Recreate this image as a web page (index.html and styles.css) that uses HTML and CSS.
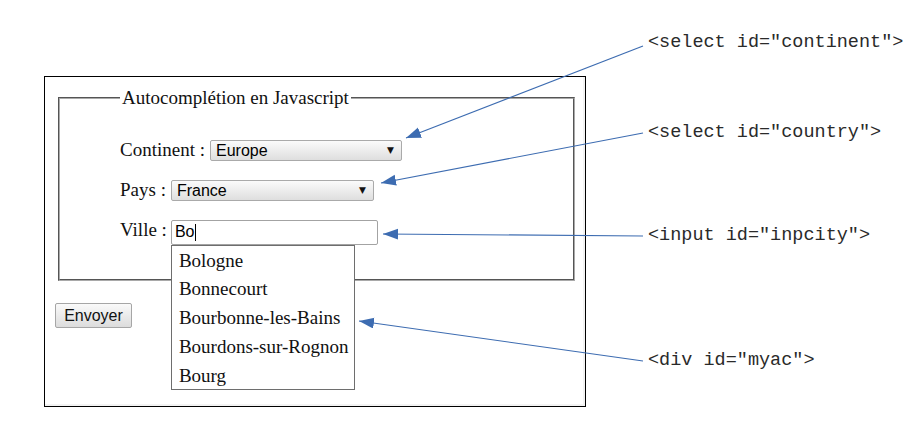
FILE: index.html
```html
<!DOCTYPE html>
<html lang="fr">
<head>
  <meta charset="UTF-8">
  <title>Autocomplétion en Javascript</title>
  <link rel="stylesheet" href="styles.css">
</head>
<body>
  <div class="page">

    <!-- Demo form -->
    <div class="demo">
      <form class="form">
        <fieldset class="group">
          <legend>Autocomplétion en Javascript</legend>
          <div class="row">
            <label class="lbl" for="continent">Continent :</label>
            <span class="select select-continent">
              <select id="continent"><option>Europe</option></select>
            </span>
          </div>
          <div class="row">
            <label class="lbl" for="country">Pays :</label>
            <span class="select select-country">
              <select id="country"><option>France</option></select>
            </span>
          </div>
          <div class="row">
            <label class="lbl lbl-city" for="inpcity">Ville :</label>
            <span class="field">
              <input type="text" id="inpcity" value="Bo" autocomplete="off">
              <span class="caret"></span>
              <span id="myac" class="suggest">
                <span class="suggest-item">Bologne</span>
                <span class="suggest-item">Bonnecourt</span>
                <span class="suggest-item">Bourbonne-les-Bains</span>
                <span class="suggest-item">Bourdons-sur-Rognon</span>
                <span class="suggest-item">Bourg</span>
              </span>
            </span>
          </div>
        </fieldset>
        <button type="button" class="send">Envoyer</button>
      </form>
    </div>

    <!-- Annotations -->
    <div class="notes">
      <p class="note note-continent">&lt;select id="continent"&gt;</p>
      <p class="note note-country">&lt;select id="country"&gt;</p>
      <p class="note note-city">&lt;input id="inpcity"&gt;</p>
      <p class="note note-myac">&lt;div id="myac"&gt;</p>
    </div>

    <!-- Arrows from annotations to elements -->
    <svg class="arrows" width="924" height="435" viewBox="0 0 924 435">
      <defs>
        <marker id="head" markerUnits="userSpaceOnUse" markerWidth="16" markerHeight="12" refX="15" refY="5.5" orient="auto">
          <path d="M0,0 L15,5.5 L0,11 Z" fill="#3d6cb1"></path>
        </marker>
      </defs>
      <g stroke="#3d6cb1" stroke-width="1.2" fill="none">
        <line x1="643" y1="46" x2="406" y2="138" marker-end="url(#head)"></line>
        <line x1="643" y1="133" x2="381" y2="183" marker-end="url(#head)"></line>
        <line x1="643" y1="236" x2="383" y2="234" marker-end="url(#head)"></line>
        <line x1="643" y1="361" x2="359" y2="321" marker-end="url(#head)"></line>
      </g>
    </svg>
  </div>
</body>
</html>
```

FILE: styles.css
```css
/* Page */
* {
  box-sizing: border-box;
}

body {
  margin: 0;
  background-color: #fff;
  color: #111;
  font-family: "Liberation Serif", "Times New Roman", serif;
}

.page {
  position: relative;
  display: flex;
  width: 924px;
  height: 435px;
  padding-left: 44px;
}

/* Demo box */
.demo {
  margin-top: 76px;
  width: 542px;
  height: 331px;
  border: 1px solid #000;
  padding: 10px 10px 0 10px;
  box-shadow: inset -2px -2px 0 #f3f3f3;
}

.group {
  width: 517px;
  margin: 0 3px;
  padding: 21px 20px 29px 60px;
  border: 2px groove #a9a9a9;
  font-size: 19px;
}

.group legend {
  padding: 0 2px;
  font-size: 19px;
}

.row {
  display: flex;
  align-items: center;
  height: 40px;
}

.lbl {
  margin-right: 5px;
}

.lbl-city {
  margin-right: 4px;
}

/* Selects */
.select {
  position: relative;
  display: inline-block;
}

.select select {
  appearance: none;
  -webkit-appearance: none;
  height: 21px;
  margin: 0;
  padding: 0 20px 0 5px;
  border: 1px solid #aaa;
  border-radius: 2px;
  background: linear-gradient(#fbfbfb, #dedede);
  color: #000;
  font-family: "Liberation Sans", Arial, sans-serif;
  font-size: 16px;
}

.select-continent select {
  width: 192px;
}

.select-country select {
  width: 203px;
}

.select::after {
  content: "\25BC";
  position: absolute;
  right: 8px;
  top: 50%;
  transform: translateY(-50%);
  font-family: "DejaVu Sans", sans-serif;
  font-size: 9px;
  color: #111;
  pointer-events: none;
}

/* City input + suggestions */
.field {
  position: relative;
  display: inline-block;
  margin-top: 4px;
}

.field input {
  display: block;
  width: 207px;
  height: 25px;
  margin: 0;
  padding: 0 3px;
  border: 1px solid #a3a3a3;
  border-radius: 2px;
  color: #000;
  font-family: "Liberation Sans", Arial, sans-serif;
  font-size: 16px;
  outline: none;
}

.caret {
  position: absolute;
  left: 24px;
  top: 4px;
  width: 1px;
  height: 17px;
  background-color: #000;
}

.suggest {
  position: absolute;
  top: 100%;
  left: 0;
  z-index: 2;
  display: flex;
  flex-direction: column;
  width: 184px;
  border: 1px solid #6e6e6e;
  background-color: #fff;
}

.suggest-item {
  height: 28.8px;
  line-height: 29px;
  padding-left: 7px;
  font-size: 19px;
  white-space: nowrap;
}

/* Send button */
.send {
  display: block;
  margin-top: 22px;
  width: 77px;
  height: 25px;
  padding: 0;
  border: 1px solid #a6a6a6;
  border-radius: 2px;
  background: linear-gradient(#fafafa, #dcdcdc);
  color: #111;
  font-family: "Liberation Sans", Arial, sans-serif;
  font-size: 16px;
}

/* Annotations */
.notes {
  margin-left: 62px;
  padding-top: 32px;
}

.note {
  margin: 0;
  height: 22px;
  line-height: 22px;
  font-family: "Liberation Mono", "Courier New", monospace;
  font-size: 18.5px;
  color: #2a2a2a;
  white-space: nowrap;
}

.note-country {
  margin-top: 68px;
}

.note-city {
  margin-top: 81px;
}

.note-myac {
  margin-top: 103px;
}

.arrows {
  position: absolute;
  top: 0;
  left: 0;
  pointer-events: none;
}
```
